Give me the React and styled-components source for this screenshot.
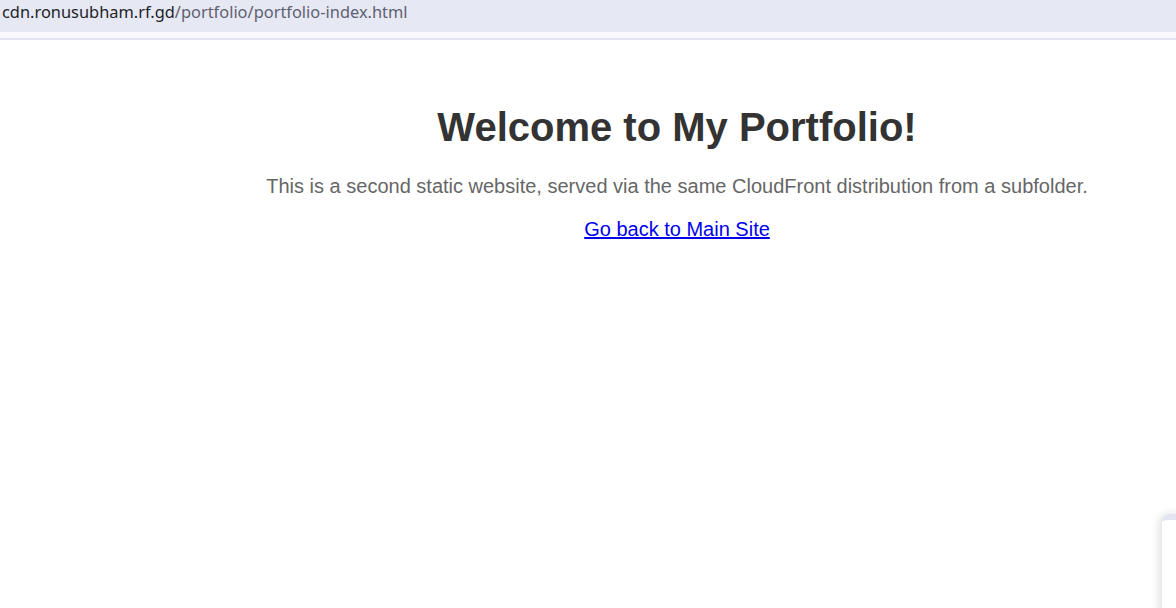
import React from 'react'
import styled, { createGlobalStyle } from 'styled-components'

const Global = createGlobalStyle`
  html, body { margin: 0; padding: 0; background: #fff; }
  body { font-family: "Liberation Sans", Arial, sans-serif; overflow: hidden; }
`

// Browser chrome
const AddressBar = styled.div`
  height: 32px;
  box-sizing: border-box;
  background: #e6e8f4;
  display: flex;
  align-items: flex-start;
  padding: 2px 0 0 2px;
  font-family: "Noto Sans", "Open Sans", sans-serif;
  font-size: 16.4px;
  color: #5f6170;
  line-height: 20px;
  span { color: #1f1f28; }
`

const Strip = styled.div`
  height: 6px;
  background: #f8f8fd;
  border-bottom: 2px solid #e2e4f0;
`

// Page
const Page = styled.main`
  position: relative;
  height: 568px;
  box-sizing: border-box;
  overflow: hidden;
  padding-left: 178px;
  text-align: center;
`

const Title = styled.h1`
  margin: 0;
  padding-top: 64px;
  font-size: 40px;
  font-weight: 700;
  color: #333;
  line-height: 46px;
`

const Lead = styled.p`
  margin: 24px 0 0;
  font-size: 20px;
  color: #666;
  line-height: 24px;
`

const BackLink = styled.a`
  display: inline-block;
  margin-top: 19px;
  font-size: 20px;
  color: #0000ee;
  text-decoration: underline;
  line-height: 24px;
`

const Corner = styled.div`
  position: absolute;
  right: -20px;
  top: 474px;
  width: 34px;
  height: 120px;
  background: #fff;
  border-top-left-radius: 8px;
  border-top: 6px solid #e4e5f4;
  box-shadow: -3px 0 8px rgba(0, 0, 0, 0.12);
`

export default function App() {
  return (
    <>
      <Global />
      <AddressBar>
        <span>cdn.ronusubham.rf.gd</span>/portfolio/portfolio-index.html
      </AddressBar>
      <Strip />
      <Page>
        <Title>Welcome to My Portfolio!</Title>
        <Lead>This is a second static website, served via the same CloudFront distribution from a subfolder.</Lead>
        <BackLink href="#">Go back to Main Site</BackLink>
        <Corner />
      </Page>
    </>
  )
}
